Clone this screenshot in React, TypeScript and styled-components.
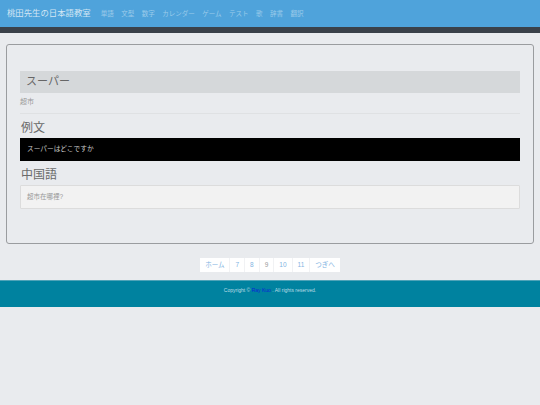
import React from 'react';
import styled, { createGlobalStyle } from 'styled-components';

const GlobalStyle = createGlobalStyle`
  html, body {
    margin: 0;
    background: #e9ebee;
    font-family: "Liberation Sans", "Noto Sans CJK JP", sans-serif;
  }
  #root {
    opacity: 0.999;
  }
`;

const navItems = ['単語', '文型', '数字', 'カレンダー', 'ゲーム', 'テスト', '歌', '辞書', '翻訳'];
const pages = ['ホーム', '7', '8', '9', '10', '11', 'つぎへ'];

export default function App() {
  return (
    <>
      <GlobalStyle />
      <Navbar>
        <Brand>桃田先生の日本語教室</Brand>
        <NavList>
          {navItems.map((item) => (
            <NavItem key={item}>{item}</NavItem>
          ))}
        </NavList>
      </Navbar>
      <DarkBar />
      <Main>
        <Card>
          <WordHeader>スーパー</WordHeader>
          <Meaning>超市</Meaning>
          <Divider />
          <SectionTitle>例文</SectionTitle>
          <Example>スーパーはどこですか</Example>
          <SectionTitle>中国語</SectionTitle>
          <Translation>超市在哪裡?</Translation>
        </Card>
        <Pagination>
          {pages.map((page) => (
            <PageLink key={page} $muted={page === '9'}>
              {page}
            </PageLink>
          ))}
        </Pagination>
      </Main>
      <Footer>
        Copyright © <FooterLink>Ray Kuo</FooterLink> . All rights reserved.
      </Footer>
    </>
  );
}

const Navbar = styled.nav`
  height: 27px;
  background: #4fa3db;
  display: flex;
  align-items: center;
  padding: 0 7px;
  box-sizing: border-box;
`;
const Brand = styled.div`
  font-size: 8.4px;
  color: #d3e6f4;
  margin-top: -4px;
`;
const NavList = styled.div`
  display: flex;
  gap: 7.5px;
  margin-left: 10px;
  margin-top: -1px;
`;
const NavItem = styled.span`
  font-size: 6.5px;
  color: #9ccbea;
`;
const DarkBar = styled.div`
  height: 6px;
  background: #3a4149;
`;
const Main = styled.main`
  padding: 11px 6px 0;
`;
const Card = styled.section`
  height: 200px;
  box-sizing: border-box;
  border: 1px solid #9a9c9f;
  border-radius: 3px;
  padding: 26px 13px 0;
`;
const WordHeader = styled.h1`
  margin: 0;
  height: 22px;
  line-height: 21px;
  padding: 0 6px;
  background: #d5d8da;
  font-size: 11px;
  font-weight: 400;
  color: #666;
`;
const Meaning = styled.div`
  margin-top: 4px;
  font-size: 7px;
  line-height: 9px;
  color: #999;
`;
const Divider = styled.hr`
  margin: 7px 0 0;
  border: 0;
  border-top: 1px solid #dfe1e3;
`;
const SectionTitle = styled.h2`
  margin: 0;
  padding-left: 1px;
  height: 24px;
  line-height: 28px;
  font-size: 12px;
  font-weight: 400;
  color: #6a6a6a;
`;
const Example = styled.div`
  height: 23px;
  line-height: 22px;
  padding: 0 7px;
  background: #000;
  font-size: 6.7px;
  color: #c8c8c8;
`;
const Translation = styled.div`
  height: 24px;
  line-height: 22px;
  box-sizing: border-box;
  padding: 0 6px;
  background: #f2f2f2;
  border: 1px solid #dcdcdc;
  border-radius: 1px;
  font-size: 6.5px;
  color: #999;
`;
const Pagination = styled.div`
  display: flex;
  justify-content: center;
  margin-top: 14px;
  height: 14px;
`;
const PageLink = styled.span<{ $muted?: boolean }>`
  padding: 0 5px;
  background: #fff;
  font-size: 6.5px;
  line-height: 14px;
  color: ${(p) => (p.$muted ? '#999' : '#7fb4e2')};
  border-left: 1px solid #f1f2f4;
  &:first-child {
    border-left: 0;
  }
`;
const Footer = styled.footer`
  margin-top: 8px;
  height: 27px;
  background: #00829f;
  border-top: 1px solid #4fa3b8;
  box-sizing: border-box;
  text-align: center;
  font-size: 5px;
  line-height: 19px;
  color: #bcdde6;
`;
const FooterLink = styled.a`
  color: #0b24d8;
`;
